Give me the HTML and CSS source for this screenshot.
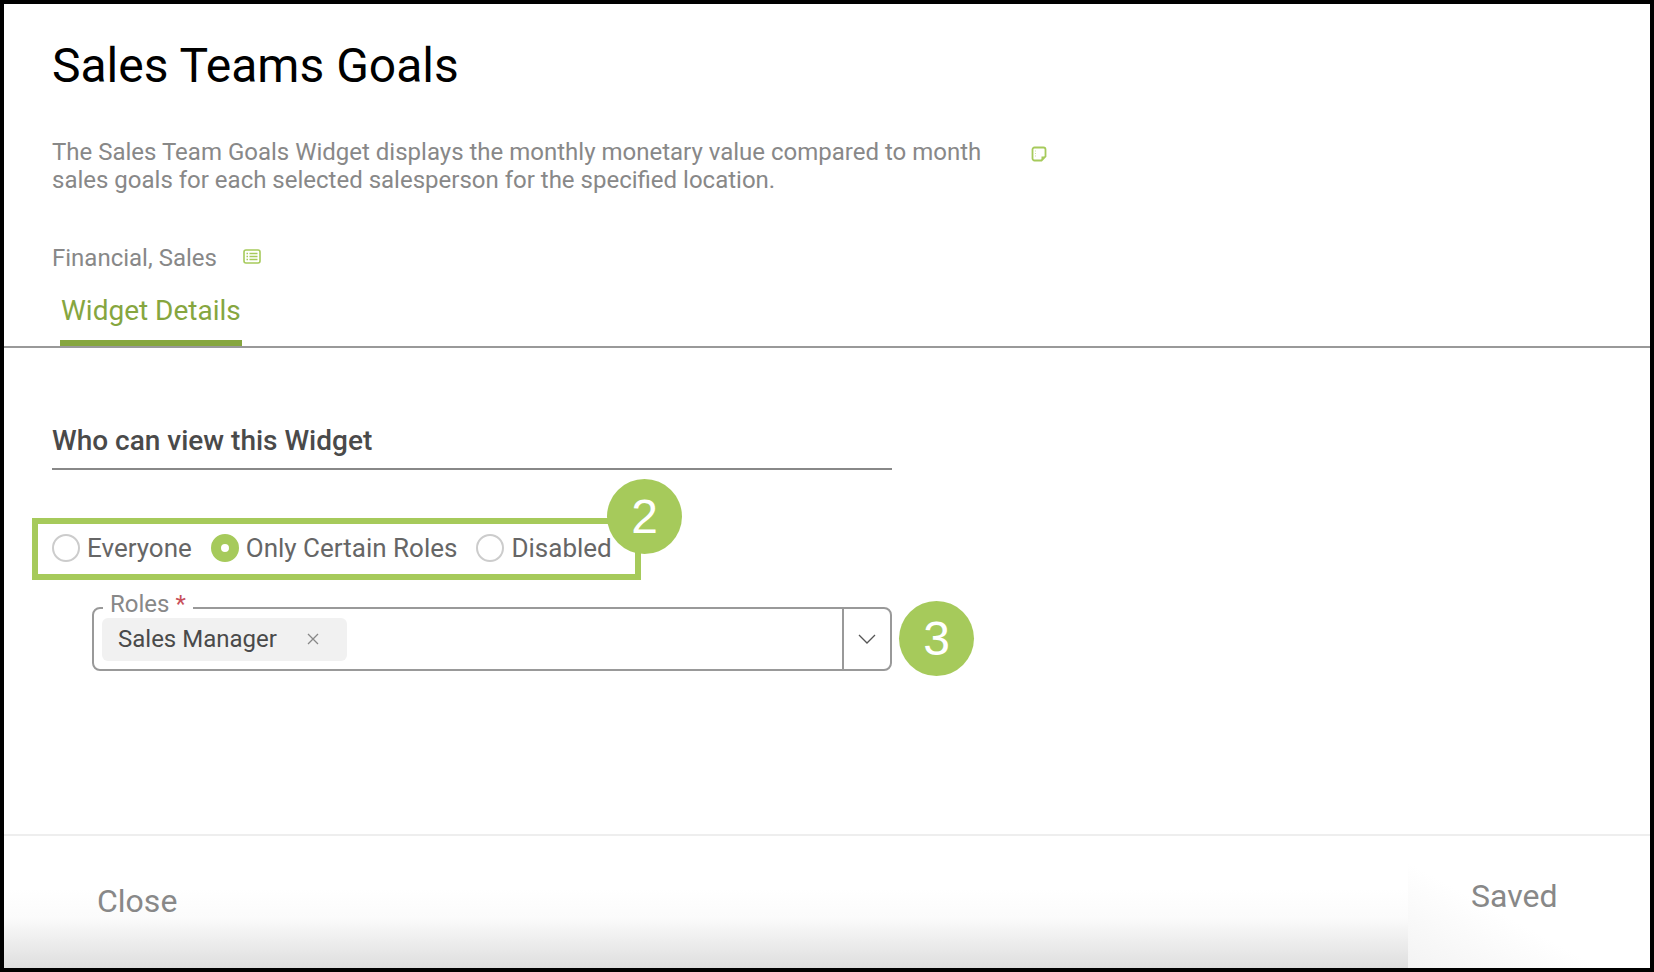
FILE: index.html
```html
<!DOCTYPE html>
<html lang="en">
<head>
    <meta charset="UTF-8">
    <title>Sales Teams Goals</title>
    <link rel="stylesheet" href="styles.css">
</head>
<body>
    <div class="frame">
        <header class="widget-head">
            <h1>Sales Teams Goals</h1>
            <div class="desc-row">
                <p class="desc">The Sales Team Goals Widget displays the monthly monetary value compared to month sales goals for each selected salesperson for the specified location.</p>
                <svg class="note-icon" width="16" height="16" viewBox="0 0 16 16">
                    <path d="M3.5 1.5h9a2 2 0 0 1 2 2v7l-4 4h-7a2 2 0 0 1-2-2v-9a2 2 0 0 1 2-2z" fill="#fff" stroke="#a6ca5b" stroke-width="1.8"/>
                    <path d="M14 10.5h-3.500v3.500z" fill="#a6ca5b"/>
                    <path d="M4.500 4.500v7" stroke="#cfe0a0" stroke-width="1" stroke-dasharray="1 1.500"/>
                </svg>
            </div>
            <div class="cat-row">
                <span>Financial, Sales</span>
                <svg class="list-icon" width="18" height="15" viewBox="0 0 18 15">
                    <rect x="1" y="1" width="16" height="13" rx="2" fill="#fff" stroke="#a6ca5b" stroke-width="1.600"/>
                    <path d="M3.500 4.500h1.500M3.500 7.500h1.500M3.500 10.500h1.500M6.500 4.500h8M6.500 7.500h8M6.500 10.500h8" stroke="#a6ca5b" stroke-width="1.500"/>
                </svg>
            </div>
        </header>

        <nav class="tabs">
            <a class="tab active">Widget Details</a>
        </nav>

        <main class="content">
            <h2>Who can view this Widget</h2>

            <div class="radio-box">
                <label class="radio"><span class="dot"></span>Everyone</label>
                <label class="radio checked"><span class="dot"></span>Only Certain Roles</label>
                <label class="radio"><span class="dot"></span>Disabled</label>
                <span class="step step-2">2</span>
            </div>

            <div class="select-row">
                <div class="select">
                    <span class="select-label">Roles <em>*</em></span>
                    <div class="select-value">
                        <span class="chip">Sales Manager
                            <svg width="14" height="14" viewBox="0 0 14 14"><path d="M2 2l10 10M12 2L2 12" stroke="#888" stroke-width="1.300"/></svg>
                        </span>
                    </div>
                    <div class="select-arrow">
                        <svg width="20" height="12" viewBox="0 0 20 12"><path d="M2 2l8 8 8-8" fill="none" stroke="#555" stroke-width="1.300"/></svg>
                    </div>
                </div>
                <span class="step step-3">3</span>
            </div>
        </main>

        <footer class="footer">
            <div class="footer-left"><a>Close</a></div>
            <div class="footer-right"><a>Saved</a></div>
        </footer>
    </div>
</body>
</html>
```

FILE: styles.css
```css
* {
    box-sizing: border-box;
}
body {
    font-family: Roboto, "Liberation Sans", sans-serif;
    margin: 0;
    background-color: #000;
}
.frame {
    height: 972px;
    border: 4px solid #000;
    background-color: #fff;
    display: flex;
    flex-direction: column;
    overflow: hidden;
}
.widget-head {
    padding: 32px 0 0 48px;
    height: 283px;
}
h1 {
    margin: 0;
    font-size: 48px;
    line-height: 60px;
    font-weight: 400;
    color: #000;
}
.desc-row {
    display: flex;
    align-items: flex-start;
    margin-top: 42px;
}
.desc {
    margin: 0;
    width: 940px;
    font-size: 24px;
    line-height: 28px;
    color: #888;
}
.note-icon {
    margin: 8px 0 0 39px;
}
.cat-row {
    display: flex;
    align-items: center;
    gap: 26px;
    margin-top: 49px;
    font-size: 24px;
    line-height: 30px;
    color: #888;
}
.list-icon {
    margin-bottom: 3px;
}
.tabs {
    height: 61px;
    padding-left: 56px;
    border-bottom: 2px solid #999;
    display: flex;
}
.tab {
    display: block;
    width: 182px;
    height: 59px;
    padding-left: 1px;
    font-size: 28px;
    line-height: 48px;
    color: #86a63f;
    border-bottom: 6px solid #86a63f;
}
.content {
    flex: 1;
    padding-left: 48px;
}
h2 {
    margin: 0;
    margin-top: 75px;
    width: 840px;
    height: 47px;
    font-size: 28px;
    line-height: 36px;
    font-weight: 500;
    color: #4a4a4a;
    border-bottom: 2px solid #888;
}
.radio-box {
    position: relative;
    display: flex;
    align-items: center;
    width: 609px;
    height: 62px;
    margin: 48px 0 0 -20px;
    padding: 0 0 2px 14px;
    border: 6px solid #a6ca5b;
}
.radio {
    display: flex;
    align-items: center;
    gap: 7px;
    margin-right: 19px;
    font-size: 26px;
    color: #666;
}
.dot {
    width: 28px;
    height: 28px;
    border-radius: 50%;
    border: 2px solid #ccc;
    background-color: #fff;
}
.checked .dot {
    border: 10px solid #a6ca5b;
}
.step {
    width: 75px;
    height: 75px;
    border-radius: 50%;
    background-color: #a6ca5b;
    color: #fff;
    font-family: "Liberation Sans", Arial, sans-serif;
    font-size: 48px;
    line-height: 75px;
    text-align: center;
}
.step-2 {
    position: absolute;
    right: -47px;
    top: -45px;
}
.select-row {
    display: flex;
    align-items: center;
    gap: 7px;
    margin: 21px 0 0 40px;
}
.select {
    position: relative;
    display: flex;
    width: 800px;
    height: 64px;
    border: 2px solid #999;
    border-radius: 8px;
}
.select-label {
    position: absolute;
    left: 9px;
    top: -18px;
    padding: 0 7px;
    background-color: #fff;
    font-size: 24px;
    line-height: 26px;
    color: #888;
}
.select-label em {
    font-style: normal;
    color: #c8505a;
}
.select-value {
    flex: 1;
    padding: 9px 0 0 8px;
    border-right: 2px solid #999;
}
.chip {
    display: inline-flex;
    align-items: center;
    gap: 29px;
    width: 245px;
    height: 43px;
    padding-left: 16px;
    border-radius: 6px;
    background-color: #f1f1f1;
    font-size: 24px;
    color: #4a4a4a;
}
.select-arrow {
    width: 46px;
    display: flex;
    align-items: center;
    justify-content: center;
}
.footer {
    display: flex;
    height: 134px;
    border-top: 2px solid #eee;
}
.footer a {
    font-size: 32px;
    color: #888;
}
.footer-left {
    flex: 1;
    padding: 46px 0 0 93px;
    background: linear-gradient(to bottom, #fff 40%, #fbfbfb 62%, #dedede 100%);
}
.footer-right {
    width: 242px;
    padding: 41px 0 0 63px;
    background: linear-gradient(to top right, #f3f3f3 0%, #fff 40%);
}
```
